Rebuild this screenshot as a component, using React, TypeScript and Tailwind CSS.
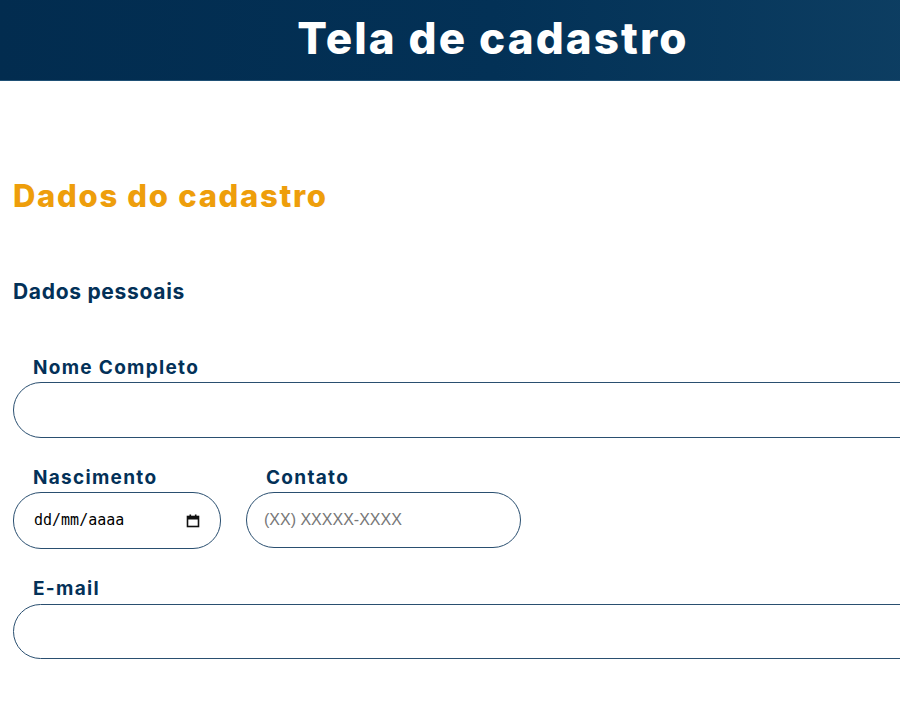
import React from "react";

const font = { fontFamily: "Inter, 'Noto Sans', sans-serif" };

function Label({ children, className = "" }: { children: React.ReactNode; className?: string }) {
  return (
    <label className={`block pl-5 text-[19px] font-bold leading-[22px] tracking-[1.3px] text-[#033158] ${className}`}>
      {children}
    </label>
  );
}

export default function App() {
  return (
    <div className="w-[900px] h-[720px] overflow-hidden bg-white" style={font}>
      <div className="w-[986px]">
        <header className="h-[81px] border-b border-[#1f5075] bg-gradient-to-r from-[#022c4f] via-[#033156] to-[#0f4064] flex items-center justify-center">
          <h1 className="text-[44px] font-extrabold text-white tracking-[2.1px] leading-none mb-[4px]">
            Tela de cadastro
          </h1>
        </header>
        <main className="px-[13px]">
          <h2 className="mt-[97px] text-[31px] font-extrabold leading-[36px] tracking-[1.7px] text-[#ee9e0b]">
            Dados do cadastro
          </h2>
          <h3 className="mt-[65px] text-[21px] font-bold leading-[26px] tracking-[0.7px] text-[#033158]">Dados pessoais</h3>

          <div className="mt-[52px]">
            <Label>Nome Completo</Label>
            <input
              type="text"
              className="mt-[3px] block w-full h-[56px] rounded-[28px] border border-[#2a4f70] bg-white px-5 outline-none"
            />
          </div>

          <div className="mt-[29px] flex gap-[25px]">
            <div className="w-[208px]">
              <Label>Nascimento</Label>
              <div className="mt-[3px] flex h-[57px] items-center justify-between rounded-[28px] border border-[#2a4f70] pl-[20px] pr-[20px]">
                <span className="text-black" style={{ fontFamily: "'DejaVu Sans Mono', monospace", fontSize: "15px", letterSpacing: "0px" }}>
                  dd/mm/aaaa
                </span>
                <svg width="14" height="14" viewBox="0 0 14 14">
                  <rect x="1.5" y="2.5" width="11" height="10" fill="none" stroke="#111" strokeWidth="1.6" />
                  <rect x="1.5" y="2.5" width="11" height="3" fill="#111" />
                  <rect x="3.5" y="0.5" width="1.6" height="3" fill="#111" />
                  <rect x="8.9" y="0.5" width="1.6" height="3" fill="#111" />
                </svg>
              </div>
            </div>
            <div className="w-[275px]">
              <Label>Contato</Label>
              <input
                type="text"
                placeholder="(XX) XXXXX-XXXX"
                className="mt-[3px] block w-full h-[56px] rounded-[28px] border border-[#2a4f70] bg-white px-[17px] text-[16px] outline-none placeholder:text-[#777]"
                style={{ fontFamily: "'Liberation Sans', Arial, sans-serif" }}
              />
            </div>
          </div>

          <div className="mt-[29px]">
            <Label>E-mail</Label>
            <input
              type="text"
              className="mt-[4px] block w-full h-[55px] rounded-[28px] border border-[#2a4f70] bg-white px-5 outline-none"
            />
          </div>
        </main>
      </div>
    </div>
  );
}
